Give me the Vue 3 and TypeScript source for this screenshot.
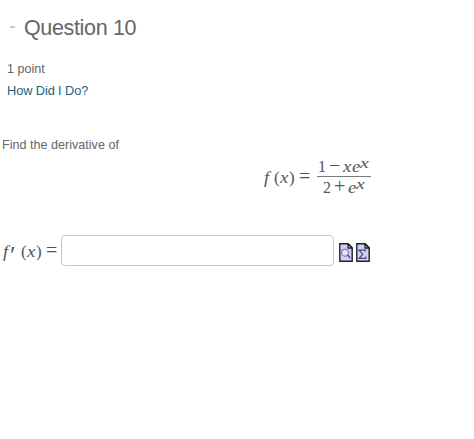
<script setup lang="ts">
import { ref } from 'vue'

interface Glyph {
  text: string
  kind: string
  width: number
}

const answer = ref('')

const left: Glyph[] = [
  { text: 'f', kind: 'func', width: 10 },
  { text: '(', kind: 'paren', width: 6 },
  { text: 'x', kind: 'var', width: 9 },
  { text: ')', kind: 'paren', width: 10 },
  { text: '=', kind: 'op', width: 12 },
]
const numerator: Glyph[] = [
  { text: '1', kind: 'num', width: 11 },
  { text: '−', kind: 'op', width: 14 },
  { text: 'x', kind: 'var', width: 9 },
  { text: 'e', kind: 'var', width: 8 },
  { text: 'x', kind: 'sup', width: 10 },
]
const denominator: Glyph[] = [
  { text: '2', kind: 'num', width: 11 },
  { text: '+', kind: 'op', width: 14 },
  { text: 'e', kind: 'var', width: 8 },
  { text: 'x', kind: 'sup', width: 10 },
]
const answerLabel: Glyph[] = [
  { text: 'f', kind: 'func', width: 7 },
  { text: '′', kind: 'prime', width: 11 },
  { text: '(', kind: 'paren', width: 6 },
  { text: 'x', kind: 'var', width: 9 },
  { text: ')', kind: 'paren', width: 10 },
  { text: '=', kind: 'op', width: 12 },
]
</script>

<template>
  <main class="page">
    <header class="heading">
      <span class="dash"></span>
      <h1>Question 10</h1>
    </header>
    <p class="points">1 point</p>
    <a class="how">How Did I Do?</a>
    <p class="prompt">Find the derivative of</p>

    <div class="equation">
      <div class="math lhs">
        <span v-for="(g, i) in left" :key="i" :class="g.kind" :style="{ width: g.width + 'px' }">{{ g.text }}</span>
      </div>
      <div class="fraction">
        <div class="math top">
          <span v-for="(g, i) in numerator" :key="i" :class="g.kind" :style="{ width: g.width + 'px' }">{{ g.text }}</span>
        </div>
        <div class="math bottom">
          <span v-for="(g, i) in denominator" :key="i" :class="g.kind" :style="{ width: g.width + 'px' }">{{ g.text }}</span>
        </div>
      </div>
    </div>

    <div class="answer">
      <div class="math label">
        <span v-for="(g, i) in answerLabel" :key="i" :class="g.kind" :style="{ width: g.width + 'px' }">{{ g.text }}</span>
      </div>
      <input v-model="answer" type="text" />
      <div class="icons">
        <svg width="14" height="19" viewBox="0 0 14 19">
          <path d="M.8.8h8.4l4 4v13.4H.8z" fill="#cfcffa" stroke="#20202c" stroke-width="1.4" />
          <path d="M9 1v4h4z" fill="#fff" stroke="#20202c" stroke-width="1.3" />
          <circle cx="6" cy="9.7" r="3.4" fill="#e1e1ff" stroke="#75759c" stroke-width="1.1" />
          <path d="M8.5 12l2.8 3" fill="none" stroke="#505078" stroke-width="1.5" />
        </svg>
        <svg width="14" height="19" viewBox="0 0 14 19">
          <path d="M.8.8h8.4l4 4v13.4H.8z" fill="#cfcffa" stroke="#20202c" stroke-width="1.4" />
          <path d="M9 1v4h4z" fill="#fff" stroke="#20202c" stroke-width="1.3" />
          <path d="M9.3 8.6V7.2H3l3.8 4L3 15.3h6.8v-1.8" fill="none" stroke="#484870" stroke-width="1.2" />
        </svg>
      </div>
    </div>
  </main>
</template>

<style>
body {
  background: #fff;
}
</style>

<style scoped>
.page {
  box-sizing: border-box;
  width: 474px;
  height: 439px;
  padding-top: 14px;
  overflow: hidden;
  font: 13px/20px "Liberation Sans", Arial, sans-serif;
  color: #666;
}
.heading {
  display: flex;
  align-items: center;
  height: 28px;
  padding-left: 10px;
}
.dash {
  width: 5px;
  height: 2px;
  margin: 0 9px 3px 0;
  background: #c8c8c8;
}
h1 {
  margin: 0;
  font-size: 21.5px;
  font-weight: 400;
  line-height: 28px;
  letter-spacing: -0.35px;
}
p {
  margin: 0;
}
.points {
  margin: 17px 0 2px 7px;
  font-size: 12.6px;
}
.how {
  display: block;
  margin-left: 7px;
  font-size: 12.8px;
  letter-spacing: -0.1px;
  color: #24607d;
}
.prompt {
  margin: 34px 0 0 2px;
  font-size: 12.6px;
}
.equation {
  display: flex;
  align-items: center;
  height: 44px;
  margin: 0 0 0 264px;
}
.math {
  display: flex;
  align-items: baseline;
  height: 20px;
  font: 16px/20px "Liberation Serif", serif;
  color: #555;
}
.lhs {
  margin-bottom: 2px;
}
.math span {
  flex: none;
  white-space: nowrap;
  transform-origin: 0 50%;
}
.math .func,
.math .var,
.math .sup {
  font-style: italic;
}
.math .func {
  transform: scaleX(1.15);
}
.math .var {
  transform: scaleX(1.17);
}
.math .sup {
  position: relative;
  top: -4px;
  font-size: 15px;
  transform: scaleX(1.33);
}
.math .paren {
  font-size: 17px;
}
.math .op {
  font-size: 20px;
}
.math .prime {
  font-size: 25px;
  transform: translateY(7px);
}
.fraction {
  width: 54px;
  margin-left: 6px;
}
.top {
  box-sizing: border-box;
  padding-left: 1px;
  border-bottom: 1px solid #777;
}
.top span {
  margin-top: -2px;
}
.bottom {
  padding-left: 6px;
}
.bottom span {
  margin-top: -1px;
}
.answer {
  display: flex;
  align-items: center;
  height: 31px;
  margin-top: 36px;
  padding-left: 3px;
}
.label {
  width: 58px;
  margin-bottom: 3px;
}
input {
  box-sizing: border-box;
  width: 273px;
  height: 31px;
  padding: 4px 8px;
  border: 1px solid #c6c6c6;
  border-radius: 4px;
  outline: none;
  background: #fff;
  font: inherit;
}
.icons {
  display: flex;
  gap: 3px;
  margin: 4px 0 0 5px;
}
svg {
  display: block;
}
</style>
